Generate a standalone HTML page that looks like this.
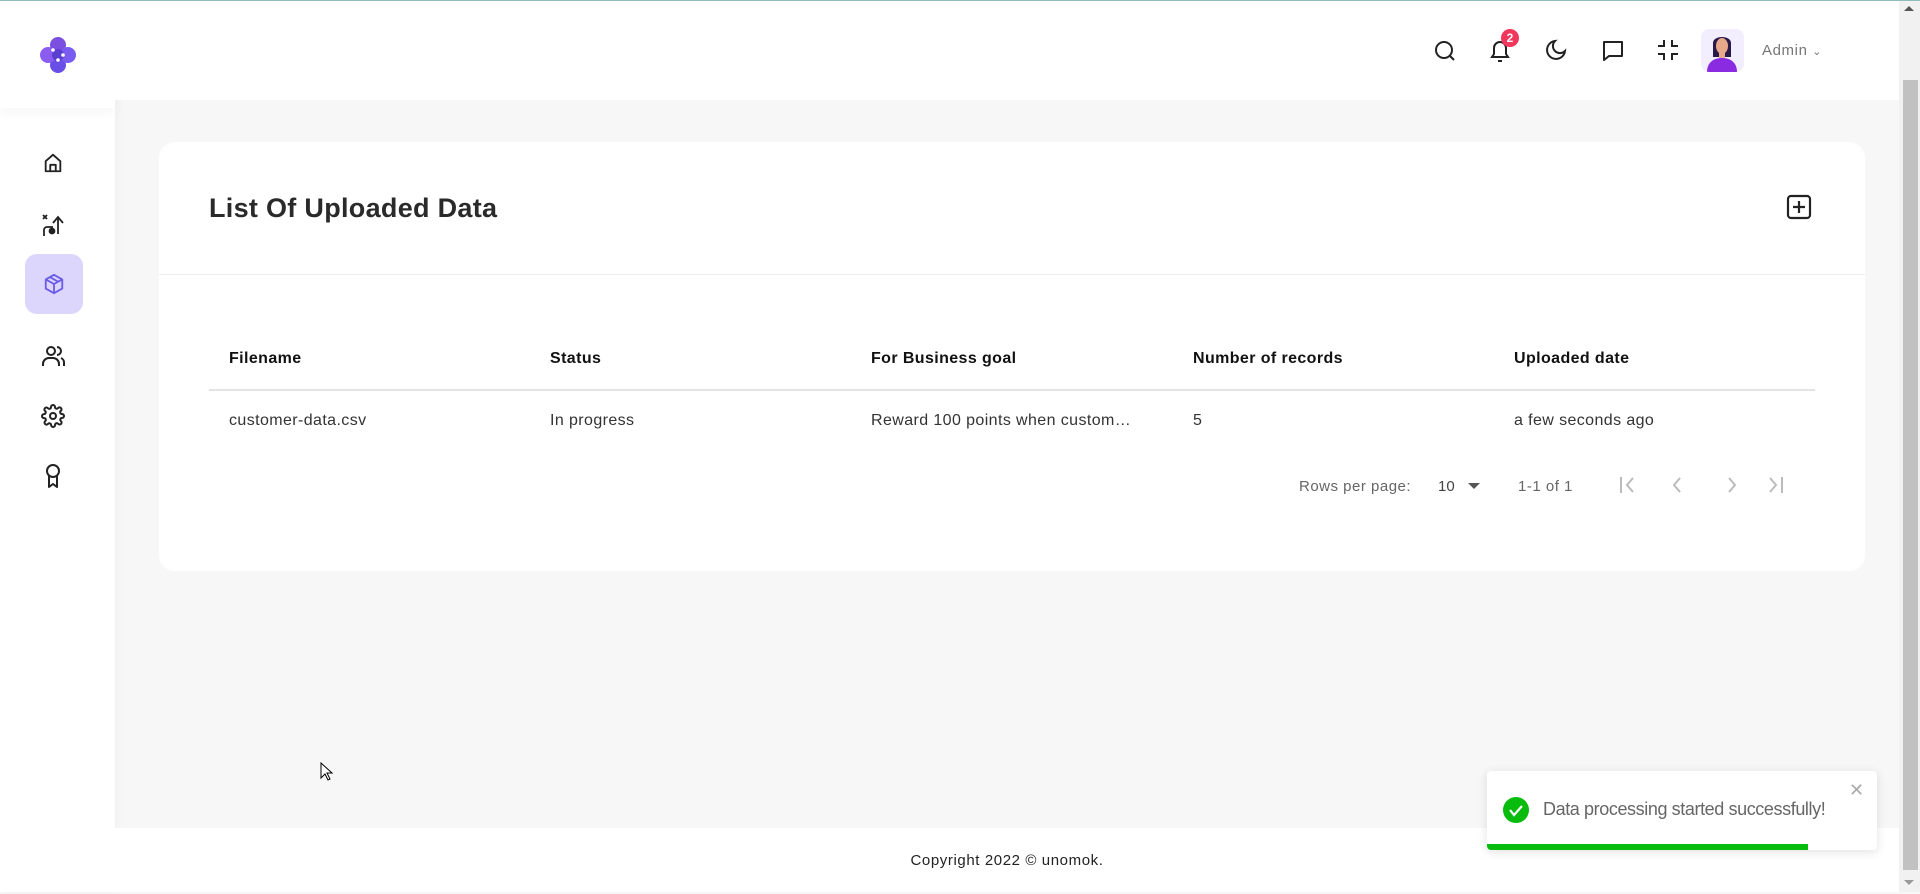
<!DOCTYPE html>
<html><head><meta charset="utf-8">
<style>
*{box-sizing:border-box;margin:0;padding:0}
body{width:1920px;height:892px;overflow:hidden;background:#f7f7f7;font-family:"Liberation Sans",sans-serif;color:#222;position:relative}
.topline{position:absolute;left:0;top:0;width:1920px;height:1px;background:#8fbcbc;z-index:9}
.side{position:absolute;left:0;top:0;width:115px;height:892px;background:#fff;box-shadow:2px 0 10px rgba(0,0,0,.03)}
.logo{height:108px;box-shadow:0 6px 10px rgba(0,0,0,.03)}
.header{position:absolute;left:115px;top:0;width:1784px;height:100px;background:#fff}
.ic{position:absolute}
.card{position:absolute;left:159px;top:142px;width:1706px;height:429px;background:#fff;border-radius:16px}
.title{position:absolute;left:50px;top:51px;font-size:27px;font-weight:bold;color:#2a2a2a;letter-spacing:.3px}
.div{position:absolute;left:0;top:132px;width:100%;height:1px;background:#eee}
.th,.td{position:absolute;font-size:16px;letter-spacing:.4px}
.th{font-weight:bold;top:208px;color:#111}
.td{top:270px;color:#333}
.hl{position:absolute;left:50px;top:247px;width:1606px;height:2px;background:#e3e3e3}
.pg{position:absolute;top:336px;font-size:15px;color:#666}
.footer{position:absolute;left:115px;top:828px;width:1784px;height:64px;background:#fff;text-align:center;font-size:15px;line-height:66px;letter-spacing:.6px;color:#222}
.scroll{position:absolute;left:1899px;top:0;width:21px;height:892px;background:#f1f1f1}
.thumb{position:absolute;left:1903px;top:80px;width:15px;height:790px;background:#c1c1c1}
.toast{position:absolute;left:1487px;top:771px;width:390px;height:79px;background:#fff;border-radius:4px;box-shadow:0 2px 10px rgba(0,0,0,.12);overflow:hidden}
</style></head><body>
<div class="topline"></div>
<div class="side">
 <div class="logo">
  <svg class="ic" style="left:38px;top:36px" width="40" height="38" viewBox="0 0 40 38">
   <circle cx="20" cy="9" r="8" fill="#7b4fe0"/><circle cx="20" cy="29" r="8" fill="#6a4ee8"/>
   <circle cx="10" cy="19" r="8" fill="#8a5cf0"/><circle cx="30" cy="19" r="8" fill="#7a5cf0"/>
   <circle cx="20" cy="19" r="6" fill="#5b3fd0"/>
   <circle cx="15" cy="14" r="1.8" fill="#fff"/><circle cx="25" cy="19" r="1.8" fill="#fff"/><circle cx="20" cy="24" r="1.8" fill="#fff"/>
  </svg>
 </div>
 <svg class="ic" style="left:42px;top:152px" width="22" height="22" viewBox="0 0 24 24" fill="none" stroke="#222" stroke-width="2" stroke-linejoin="round"><path d="M4 10l8-7 8 7v11H4z"/><path d="M9 21v-7h6v7"/></svg>
 <svg class="ic" style="left:40px;top:212px" width="24" height="26" viewBox="0 0 24 26" fill="none" stroke="#222" stroke-width="1.8"><path d="M3 3l4 4M7 3l-4 4"/><path d="M18 22V6M13 11l5-6 5 6"/><path d="M4 24v-6a3 3 0 0 1 3-3h6"/><circle cx="12" cy="19" r="2.5" fill="#222"/></svg>
 <div style="position:absolute;left:25px;top:254px;width:58px;height:60px;border-radius:12px;background:#dcd6fd"></div>
 <svg class="ic" style="left:43px;top:272px" width="22" height="24" viewBox="0 0 24 24" fill="none" stroke="#6b5ce7" stroke-width="2" stroke-linejoin="round"><path d="M12 2l9 5v10l-9 5-9-5V7z"/><path d="M3 7l9 5 9-5M12 12v10M7.5 4.5l9 5"/></svg>
 <svg class="ic" style="left:41px;top:344px" width="24" height="24" viewBox="0 0 24 24" fill="none" stroke="#222" stroke-width="2"><circle cx="10" cy="7" r="4"/><path d="M2 22v-2a6 6 0 0 1 6-6h4a6 6 0 0 1 6 6v2"/><path d="M16 3a4 4 0 0 1 0 8M20 14a5 5 0 0 1 3 5v3"/></svg>
 <svg class="ic" style="left:41px;top:404px" width="24" height="24" viewBox="0 0 24 24" fill="none" stroke="#222" stroke-width="2"><circle cx="12" cy="12" r="3"/><path d="M19.4 15a1.7 1.7 0 0 0 .3 1.8l.1.1a2 2 0 1 1-2.8 2.8l-.1-.1a1.7 1.7 0 0 0-1.8-.3 1.7 1.7 0 0 0-1 1.5V21a2 2 0 1 1-4 0v-.1a1.7 1.7 0 0 0-1.1-1.5 1.7 1.7 0 0 0-1.8.3l-.1.1a2 2 0 1 1-2.8-2.8l.1-.1a1.7 1.7 0 0 0 .3-1.8 1.7 1.7 0 0 0-1.5-1H3a2 2 0 1 1 0-4h.1a1.7 1.7 0 0 0 1.5-1.1 1.7 1.7 0 0 0-.3-1.8l-.1-.1a2 2 0 1 1 2.8-2.8l.1.1a1.7 1.7 0 0 0 1.8.3H9a1.7 1.7 0 0 0 1-1.5V3a2 2 0 1 1 4 0v.1a1.7 1.7 0 0 0 1 1.5 1.7 1.7 0 0 0 1.8-.3l.1-.1a2 2 0 1 1 2.8 2.8l-.1.1a1.7 1.7 0 0 0-.3 1.8V9a1.7 1.7 0 0 0 1.5 1H21a2 2 0 1 1 0 4h-.1a1.7 1.7 0 0 0-1.5 1z"/></svg>
 <svg class="ic" style="left:43px;top:463px" width="20" height="26" viewBox="0 0 20 26" fill="none" stroke="#222" stroke-width="2" stroke-linejoin="round"><circle cx="10" cy="8" r="6"/><path d="M6 13v11l4-3 4 3V13"/></svg>
</div>
<div class="header">
 <svg class="ic" style="left:1318px;top:39px" width="24" height="24" viewBox="0 0 24 24" fill="none" stroke="#222" stroke-width="2"><circle cx="11" cy="11" r="8"/><path d="M17 17l4 4"/></svg>
 <svg class="ic" style="left:1373px;top:38px" width="24" height="26" viewBox="0 0 24 26" fill="none" stroke="#222" stroke-width="2"><path d="M6 10a6 6 0 0 1 12 0v6l2 3H4l2-3z"/><path d="M10 23h4"/></svg>
 <div style="position:absolute;left:1386px;top:29px;width:18px;height:18px;border-radius:9px;background:#f2375c;color:#fff;font-size:12px;font-weight:bold;text-align:center;line-height:18px">2</div>
 <svg class="ic" style="left:1429px;top:38px" width="24" height="24" viewBox="0 0 24 24" fill="none" stroke="#222" stroke-width="2"><path d="M21 13A9 9 0 1 1 11 3a7 7 0 0 0 10 10z"/></svg>
 <svg class="ic" style="left:1486px;top:39px" width="24" height="24" viewBox="0 0 24 24" fill="none" stroke="#222" stroke-width="2" stroke-linejoin="round"><path d="M3 3h18v14H8l-5 4z"/></svg>
 <svg class="ic" style="left:1541px;top:38px" width="24" height="24" viewBox="0 0 24 24" fill="none" stroke="#222" stroke-width="2"><path d="M8 2v6H2M16 2v6h6M8 22v-6H2M16 22v-6h6"/></svg>
 <div style="position:absolute;left:1586px;top:29px;width:43px;height:43px;border-radius:8px;background:#f3eefe;overflow:hidden">
  <svg width="43" height="43" viewBox="0 0 43 43"><path d="M12 14c0-8 18-8 18 0v14H12z" fill="#2a1a4a"/><ellipse cx="21" cy="17" rx="6" ry="8" fill="#e8a88a"/><rect x="18" y="23" width="6" height="6" fill="#e8a88a"/><path d="M6 43c0-9 6-14 15-14s15 5 15 14z" fill="#8a2be2"/></svg>
 </div>
 <div style="position:absolute;left:1647px;top:42px;font-size:15px;color:#777;letter-spacing:.6px">Admin <span style="font-size:11px">&#8964;</span></div>
</div>
<div class="card">
 <div class="title">List Of Uploaded Data</div>
 <svg class="ic" style="left:1627px;top:52px" width="26" height="26" viewBox="0 0 26 26" fill="none" stroke="#222" stroke-width="2.2"><rect x="2" y="2" width="22" height="22" rx="3"/><path d="M13 7v12M7 13h12"/></svg>
 <div class="div"></div>
 <div class="th" style="left:70px">Filename</div>
 <div class="th" style="left:391px">Status</div>
 <div class="th" style="left:712px">For Business goal</div>
 <div class="th" style="left:1034px">Number of records</div>
 <div class="th" style="left:1355px">Uploaded date</div>
 <div class="hl"></div>
 <div class="td" style="left:70px">customer-data.csv</div>
 <div class="td" style="left:391px">In progress</div>
 <div class="td" style="left:712px">Reward 100 points when custom…</div>
 <div class="td" style="left:1034px">5</div>
 <div class="td" style="left:1355px">a few seconds ago</div>
 <div class="pg" style="left:1140px;letter-spacing:.5px">Rows per page:</div>
 <div class="pg" style="left:1279px;color:#444">10</div>
 <div style="position:absolute;left:1309px;top:341px;border-left:6px solid transparent;border-right:6px solid transparent;border-top:6px solid #555"></div>
 <div class="pg" style="left:1359px;letter-spacing:.5px">1-1 of 1</div>
 <svg class="ic" style="left:1460px;top:333px" width="190" height="20" viewBox="0 0 190 20" fill="none" stroke="#bbb" stroke-width="2"><path d="M2 2v16M14 3l-6 7 6 7"/><path d="M61 3l-6 7 6 7"/><path d="M110 3l6 7-6 7"/><path d="M151 3l6 7-6 7M163 2v16"/></svg>
</div>
<div class="footer">Copyright 2022 © unomok.</div>
<div class="scroll"></div><div class="thumb"></div>
<div style="position:absolute;left:1904px;top:6px;border-left:5px solid transparent;border-right:5px solid transparent;border-bottom:5px solid #555"></div>
<div style="position:absolute;left:1904px;top:880px;border-left:5px solid transparent;border-right:5px solid transparent;border-top:5px solid #999"></div>
<div class="toast">
 <svg class="ic" style="left:16px;top:26px" width="26" height="26" viewBox="0 0 26 26"><circle cx="13" cy="13" r="13" fill="#07bc0c"/><path d="M7 13l4 5 8-9" fill="none" stroke="#fff" stroke-width="2.2"/></svg>
 <div style="position:absolute;left:56px;top:28px;font-size:18px;color:#666;letter-spacing:-.4px">Data processing started successfully!</div>
 <div style="position:absolute;left:362px;top:9px;font-size:18px;color:#aaa">✕</div>
 <div style="position:absolute;left:0;top:73px;width:321px;height:6px;background:#07bc0c"></div>
</div>
<svg class="ic" style="left:320px;top:762px" width="14" height="20" viewBox="0 0 14 20"><path d="M1 1v15l4-4 3 6 2-1-3-6h5z" fill="#fff" stroke="#000" stroke-width="1"/></svg>
</body></html>
